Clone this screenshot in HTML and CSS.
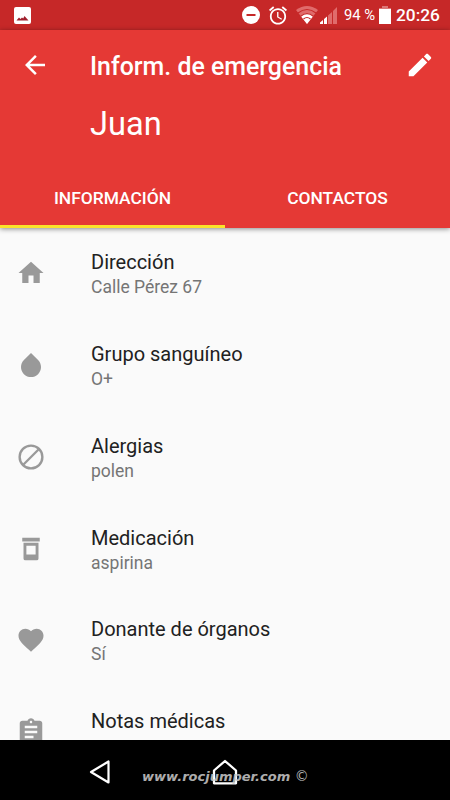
FILE: index.html
```html
<!DOCTYPE html>
<html lang="es">
<head>
<meta charset="utf-8">
<title>Inform. de emergencia</title>
<link rel="stylesheet" href="styles.css">
</head>
<body>
<div class="screen">
  <div class="status">
    <svg class="s-photo" width="17" height="17" viewBox="0 0 17 17"><rect width="17" height="17" rx="2" fill="#fff"/><path d="M2.500 13.500L5 10.500l1.500 1.500L8 10.500l1.200 1L10.500 9l4 4.500z" fill="#a01f2c"/></svg>
    <svg class="s-dnd" width="18" height="18" viewBox="0 0 18 18"><circle cx="9" cy="9" r="9" fill="#fff"/><path d="M4.500 9h9" stroke="#c62828" stroke-width="2"/></svg>
    <svg class="s-alarm" width="18" height="19" viewBox="2 1.500 20 21"><path fill="#fff" d="M22 5.720l-4.600-3.860-1.290 1.530 4.600 3.860L22 5.720zM7.880 3.390L6.600 1.860 2 5.710l1.290 1.530 4.590-3.850zM12.500 8H11v6l4.750 2.850.75-1.230-4-2.370V8zM12 4c-4.970 0-9 4.030-9 9s4.020 9 9 9 9-4.030 9-9-4.030-9-9-9zm0 16c-3.870 0-7-3.130-7-7s3.130-7 7-7 7 3.130 7 7-3.130 7-7 7z"/></svg>
    <svg class="s-wifi" width="22" height="18" viewBox="0 0 22 18"><path d="M11 18L0 4Q11-4 22 4z" fill="#e06b6b"/><path d="M11 18L4.700 10Q11 4.500 17.300 10z" fill="#fff"/><path d="M2 7Q11 0 20 7M4.700 10.200Q11 5 17.300 10.200M7.500 13Q11 10 14.500 13" fill="none" stroke="#c62828" stroke-width="1.200"/></svg>
    <svg class="s-signal" width="17" height="17" viewBox="0 0 17 17"><path d="M0 17v-1.500L3 13v4zM4 17v-5l3-2.500V17z" fill="#fff"/><path d="M8 17V8.500L12 5v12zM13 17V4l4-4v17z" fill="#e06b6b"/></svg>
    <span class="pct">94 %</span>
    <svg class="s-batt" width="12" height="18" viewBox="0 0 12 18"><path d="M3 0h6v2h3v2H0V2h3z" fill="#dc7777"/><path d="M0 3h12v15H0z" fill="#fff"/></svg>
    <span class="clock">20:26</span>
  </div>
  <header class="header">
    <div class="bar">
      <svg class="back" width="30" height="30" viewBox="0 0 24 24"><path fill="#fff" d="M20 11H7.830l5.590-5.590L12 4l-8 8 8 8 1.410-1.410L7.830 13H20v-2z"/></svg>
      <h1 class="title">Inform. de emergencia</h1>
      <svg class="edit" width="30" height="30" viewBox="0 0 24 24"><path fill="#fff" d="M3 17.250V21h3.750L17.810 9.940l-3.750-3.750L3 17.250zM20.710 7.040c.39-.39.39-1.020 0-1.410l-2.340-2.340c-.39-.39-1.020-.39-1.410 0l-1.830 1.830 3.750 3.750 1.830-1.830z"/></svg>
    </div>
    <div class="name">Juan</div>
    <nav class="tabs">
      <div class="tab active">INFORMACIÓN</div>
      <div class="tab">CONTACTOS</div>
    </nav>
  </header>
  <main class="list">
    <div class="row">
      <svg class="icon" viewBox="0 0 24 24"><path d="M10 20v-6h4v6h5v-8h3L12 3 2 12h3v8z"/></svg>
      <div><div class="label">Dirección</div><div class="value">Calle Pérez 67</div></div>
    </div>
    <div class="row">
      <svg class="icon" viewBox="0 0 24 24"><path d="M17.660 8L12 2.350 6.340 8C4.780 9.560 4 11.640 4 13.640s.78 4.110 2.340 5.670 3.610 2.350 5.660 2.350 4.100-.79 5.660-2.350S20 15.640 20 13.640 19.220 9.560 17.660 8z"/></svg>
      <div><div class="label">Grupo sanguíneo</div><div class="value">O+</div></div>
    </div>
    <div class="row">
      <svg class="icon" viewBox="0 0 24 24"><g fill="none" stroke="#999" stroke-width="1.900"><circle cx="12" cy="12" r="9.100"/><path d="M5.600 18.400L18.400 5.600"/></g></svg>
      <div><div class="label">Alergias</div><div class="value">polen</div></div>
    </div>
    <div class="row">
      <svg class="icon" viewBox="0 0 24 24"><path fill-rule="evenodd" d="M5 3h14v3H5zM6 7h12v12.500q0 1.500-1.500 1.500h-9Q6 21 6 19.500zM8.300 9.300v7h7.400v-7z"/></svg>
      <div><div class="label">Medicación</div><div class="value">aspirina</div></div>
    </div>
    <div class="row">
      <svg class="icon" viewBox="0 0 24 24"><path d="M12 21.350l-1.450-1.320C5.400 15.360 2 12.280 2 8.500 2 5.420 4.420 3 7.500 3c1.740 0 3.410.81 4.500 2.090C13.090 3.810 14.760 3 16.500 3 19.580 3 22 5.420 22 8.500c0 3.780-3.400 6.860-8.550 11.540L12 21.350z"/></svg>
      <div><div class="label">Donante de órganos</div><div class="value">Sí</div></div>
    </div>
    <div class="row">
      <svg class="icon" viewBox="0 0 24 24"><path d="M19 3h-4.180C14.400 1.840 13.300 1 12 1c-1.300 0-2.400.84-2.820 2H5c-1.100 0-2 .9-2 2v14c0 1.100.9 2 2 2h14c1.100 0 2-.9 2-2V5c0-1.100-.9-2-2-2zm-7 0c.55 0 1 .45 1 1s-.45 1-1 1-1-.45-1-1 .45-1 1-1zm2 14H7v-2h7v2zm3-4H7v-2h10v2zm0-4H7V7h10v2z"/></svg>
      <div><div class="label">Notas médicas</div></div>
    </div>
  </main>
  <footer class="nav">
    <svg class="nav-back" width="22" height="26" viewBox="0 0 22 26"><path d="M19.500 2.500v21L2 13z" fill="none" stroke="#fff" stroke-width="2.200" stroke-linejoin="round"/></svg>
    <svg class="nav-home" width="26" height="26" viewBox="0 0 26 26"><path d="M2 24.300V11.500L13 2l11 9.500v12.800z" fill="none" stroke="#fff" stroke-width="2.300" stroke-linejoin="round"/></svg>
    <span class="mark">www.rocjumper.com <span class="copy">©</span></span>
  </footer>
</div>
</body>
</html>
```

FILE: styles.css
```css
* { box-sizing: border-box; }
body { margin: 0; font-family: Roboto, "Liberation Sans", sans-serif; }
svg { display: block; flex: none; }
.screen { width: 450px; height: 800px; overflow: hidden; display: flex; flex-direction: column; background: #fafafa; }
.status { flex: none; height: 30px; display: flex; align-items: center; background: #c62828; color: #fff; padding-left: 14px; }
.s-dnd { margin-left: 211px; }
.s-alarm { margin-left: 9px; }
.s-wifi { margin-left: 9px; }
.s-signal { margin-left: 2px; }
.pct { margin-left: 7px; width: 30px; font-size: 14.800px; white-space: nowrap; line-height: 31px; padding-top: 1px; }
.s-batt { margin-left: 5px; }
.clock { margin-left: 5px; font-size: 17.300px; font-weight: 500; line-height: 31px; padding-top: 1px; }
.header { flex: none; height: 198px; background: #e53935; color: #fff; display: flex; flex-direction: column; box-shadow: 0 1px 5px rgba(0,0,0,.45); position: relative; }
.bar { height: 70px; display: flex; align-items: center; padding: 0 15px 0 20px; }
.title { margin: 3px 0 0 40px; flex: 1; font-size: 24.900px; font-weight: 500; line-height: 30px; white-space: nowrap; }
.name { padding-left: 90px; height: 70px; font-size: 32.600px; line-height: 49px; }
.tabs { display: flex; height: 58px; }
.tab { flex: 1; display: flex; justify-content: center; font-size: 17.400px; font-weight: 500; line-height: 57px; border-bottom: 3px solid transparent; }
.active { border-bottom-color: #fae32a; }
.list { flex: 1; min-height: 0; overflow: hidden; padding-top: 20px; }
.row { height: 91.860px; display: flex; padding-left: 16px; }
.icon { width: 30px; height: 30px; margin: 10px 45px 0 0; fill: #999; }
.label { font-size: 20px; line-height: 28px; color: #212121; white-space: nowrap; }
.value { font-size: 17.500px; line-height: 23.500px; color: #757575; white-space: nowrap; }
.nav { flex: none; position: relative; height: 60px; background: #000; display: flex; align-items: center; padding: 4px 0 0 89px; }
.nav-home { margin: -1px 0 0 101px; }
.mark { position: absolute; left: 142px; top: 26px; font: italic bold 13px/20px "DejaVu Sans", sans-serif; color: #ccc; opacity: .85; white-space: nowrap; }
.copy { font-size: 14px; font-style: normal; font-weight: normal; }
```
